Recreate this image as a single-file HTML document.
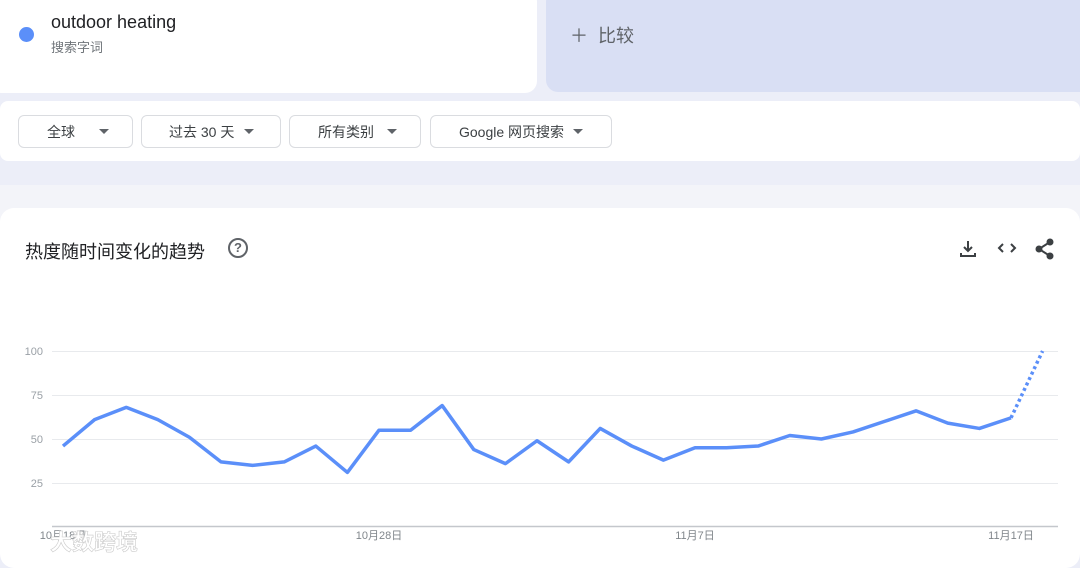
<!DOCTYPE html>
<html><head><meta charset="utf-8"><style>
body{margin:0;width:1080px;height:560px;overflow:hidden;background:#eceef8;font-family:"Liberation Sans","Noto Sans CJK SC",sans-serif;position:relative}
.a{position:absolute}
.card1{left:-10px;top:-10px;width:547px;height:103px;background:#fff;border-radius:12px}
.card2{left:546px;top:-10px;width:550px;height:102px;background:#d9dff4;border-radius:12px}
.bar{left:0;top:101px;width:1080px;height:60px;background:#fff;border-radius:8px}
.btn{position:absolute;top:115px;height:33px;border:1px solid #dadce0;border-radius:6px;background:#fff;font-size:14px;color:#3c4043;line-height:32px;box-sizing:border-box}
.btn i{position:absolute;top:13px;width:0;height:0;border-left:5px solid transparent;border-right:5px solid transparent;border-top:5px solid #5f6368}
.chart{left:0;top:208px;width:1080px;height:360px;background:#fff;border-radius:14px}
</style></head><body>
<div class="a" style="left:0;top:185px;width:1080px;height:40px;background:#f3f4f9"></div>
<div class="a card1"></div>
<div class="a" style="left:19px;top:27px;width:15px;height:15px;border-radius:50%;background:#5b8ff9"></div>
<div class="a" style="left:51px;top:12px;font-size:18px;color:#202124">outdoor heating</div>
<div class="a" style="left:51px;top:37px;font-size:13px;color:#70757a">搜索字词</div>
<div class="a card2"></div>
<div class="a" style="left:570px;top:22px;font-size:18px;color:#5f6368">＋&nbsp; 比较</div>
<div class="a bar"></div>
<div class="btn" style="left:18px;width:115px"><span style="margin-left:28px">全球</span><i style="left:80px"></i></div>
<div class="btn" style="left:141px;width:140px"><span style="margin-left:27px">过去 30 天</span><i style="left:102px"></i></div>
<div class="btn" style="left:289px;width:132px"><span style="margin-left:28px">所有类别</span><i style="left:97px"></i></div>
<div class="btn" style="left:430px;width:182px"><span style="margin-left:28px">Google 网页搜索</span><i style="left:142px"></i></div>
<div class="a chart"></div>
<div class="a" style="left:25px;top:238px;font-size:18px;color:#202124">热度随时间变化的趋势</div>
<div class="a" style="left:228px;top:238px;width:16px;height:16px;border:2px solid #5f6368;border-radius:50%;font-size:13px;line-height:16px;text-align:center;color:#5f6368;font-weight:bold">?</div>
<svg class="a" style="left:0;top:0" width="1080" height="560">
<g fill="none" stroke="#3c4043" stroke-width="2">
<path d="M968 241v10M964 247l4 4 4-4M961 253v3h14v-3"/>
<path d="M1003 244l-4 4 4 4M1011 244l4 4-4 4"/>
</g>
<g fill="#3c4043" stroke="#3c4043" stroke-width="2"><circle cx="1050" cy="242" r="2.5"/><circle cx="1039" cy="249" r="2.5"/><circle cx="1050" cy="256" r="2.5"/><path d="M1050 242l-11 7 11 7" fill="none"/></g>
<g stroke="#e8eaed" stroke-width="1"><path d="M52 351.5H1058M52 395.5H1058M52 439.5H1058M52 483.5H1058"/></g>
<path d="M52 526.5H1058" stroke="#c4c7cc" stroke-width="1.5"/>
<g font-size="11" fill="#9aa0a6" text-anchor="end"><text x="43" y="355">100</text><text x="43" y="399">75</text><text x="43" y="443">50</text><text x="43" y="487">25</text></g>
<g font-size="11" fill="#80868b" text-anchor="middle"><text x="63" y="539">10月18日</text><text x="379" y="539">10月28日</text><text x="695" y="539">11月7日</text><text x="1011" y="539">11月17日</text></g>
<g transform="translate(63,527) scale(31.6,-1.76)">
<polyline fill="none" stroke="#5b8ff9" stroke-width="3.5" vector-effect="non-scaling-stroke" stroke-linejoin="round" points="0,46 1,61 2,68 3,61 4,51 5,37 6,35 7,37 8,46 9,31 10,55 11,55 12,69 13,44 14,36 15,49 16,37 17,56 18,46 19,38 20,45 21,45 22,46 23,52 24,50 25,54 26,60 27,66 28,59 29,56 30,62"/>
<polyline fill="none" stroke="#5b8ff9" stroke-width="3.5" stroke-dasharray="3 3" vector-effect="non-scaling-stroke" points="30,62 31,100"/>
</g>
<text x="50" y="550" font-size="22" font-weight="bold" fill="#fff" stroke="#ccc" stroke-width="0.6">大数跨境</text>
</svg>
</body></html>
